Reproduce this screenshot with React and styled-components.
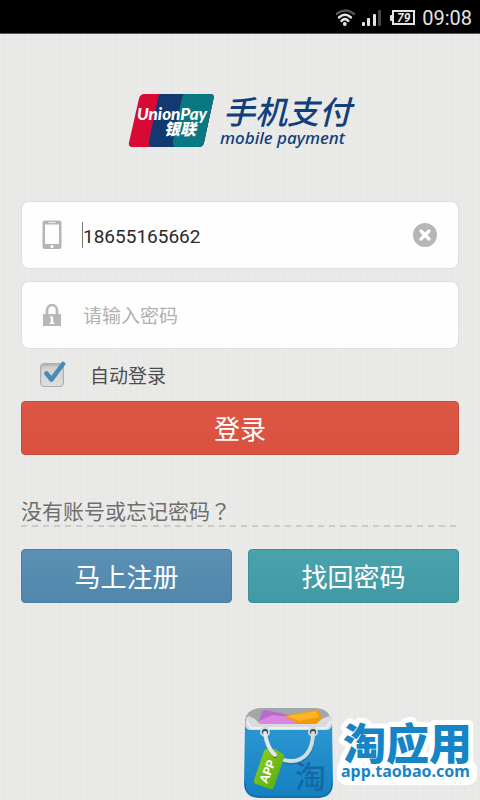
import React, { useState } from 'react'
import styled, { createGlobalStyle } from 'styled-components'

const cjk = '"Noto Sans CJK SC", sans-serif'

const GlobalStyle = createGlobalStyle`
  * {
    box-sizing: border-box;
  }

  body {
    margin: 0;
    font-family: Roboto, ${cjk};
    background-color: #e9e9e7;
    background-image:
      repeating-linear-gradient(90deg, rgba(255, 255, 255, 0.1) 0 1px, transparent 1px 3px, rgba(0, 0, 0, 0.008) 3px 4px, transparent 4px 7px),
      repeating-linear-gradient(0deg, rgba(255, 255, 255, 0.1) 0 1px, transparent 1px 4px, rgba(0, 0, 0, 0.008) 4px 5px, transparent 5px 9px);
  }
`

const Page = styled.div`
  min-height: 100vh;
  display: flex;
  flex-direction: column;
`

const StatusBar = styled.header`
  display: flex;
  align-items: center;
  justify-content: flex-end;
  height: 34px;
  padding: 2px 8px 0 0;
  background: #000;
  border-bottom: 1px solid #555;
  color: #e4e4e4;
  font-size: 20px;

  svg {
    margin-right: 6px;
  }
`

const Content = styled.main`
  flex: 1;
  display: flex;
  flex-direction: column;
  padding: 46px 21px 0;
`

const Brand = styled.div`
  display: flex;
  justify-content: center;
  height: 121px;
`

const Form = styled.form`
  display: flex;
  flex-direction: column;
`

const Field = styled.div`
  display: flex;
  align-items: center;
  height: 68px;
  margin-bottom: 12px;
  padding: 0 21px 0 18px;
  background: #fefefe;
  border: 1px solid #dededd;
  border-radius: 8px;
`

const FieldIcon = styled.label`
  display: flex;
  justify-content: center;
  width: 24px;
  margin-right: 18px;
`

const Input = styled.input`
  flex: 1;
  min-width: 0;
  height: 26px;
  padding: 2px 0 0;
  border: 0;
  border-left: 1px solid ${(props) => props.$active ? '#777' : 'transparent'};
  outline: none;
  background: transparent;
  color: #2a2a2a;
  font-family: Roboto, ${cjk};
  font-size: 19px;

  &::placeholder {
    color: #b0b0b0;
    opacity: 1;
  }
`

const ClearButton = styled.button`
  display: flex;
  padding: 0;
  border: 0;
  background: none;
  cursor: pointer;
`

const Remember = styled.label`
  display: flex;
  align-items: flex-start;
  gap: 24px;
  height: 28px;
  padding-left: 19px;
  color: #4e4e4e;
  font-size: 19px;
  line-height: 32px;
`

const CheckWrap = styled.span`
  display: grid;

  > * {
    grid-area: 1 / 1;
  }
`

const Checkbox = styled.input`
  appearance: none;
  align-self: end;
  width: 24px;
  height: 24px;
  margin: 0;
  background: linear-gradient(#cfcfcf, #dedede);
  border: 1px solid #adadad;
  border-radius: 4px;
  box-shadow: inset 0 2px 2px rgba(0, 0, 0, 0.14);

  & + svg {
    visibility: hidden;
    pointer-events: none;
  }

  &:checked + svg {
    visibility: visible;
  }
`

const Button = styled.button`
  flex: 1;
  min-height: 54px;
  padding: 0;
  background: linear-gradient(${(props) => props.$from}, ${(props) => props.$to});
  border: 1px solid ${(props) => props.$edge};
  border-radius: 4px;
  color: #fff;
  font-family: ${cjk};
  font-size: 26px;
  line-height: 36px;
  cursor: pointer;
`

const LoginRow = styled.div`
  display: flex;
  margin-top: 12px;
`

const Hint = styled.p`
  margin: 43px 0 0;
  color: #6e6e6e;
  font-size: 21px;
  line-height: 25px;
`

const QuestionMark = styled.span`
  font-family: "Noto Sans CJK TC", sans-serif;
`

const Divider = styled.div`
  height: 2px;
  background: repeating-linear-gradient(90deg, #cbcbca 0 6px, transparent 6px 11px);
`

const Actions = styled.div`
  display: flex;
  gap: 16px;
  margin-top: 22px;
`

const Store = styled.footer`
  display: flex;
  justify-content: flex-end;
  margin: auto -21px 0 0;
`

const PhoneIcon = () => (
  <svg width="20" height="30" viewBox="0 0 20 30" aria-hidden="true">
    <path fill="#b5b5b5" fillRule="evenodd" d="M3 0.500h14a2.500 2.500 0 0 1 2.500 2.500v23.500a2.500 2.500 0 0 1-2.500 2.500h-14a2.500 2.500 0 0 1-2.500-2.500v-23.500a2.500 2.500 0 0 1 2.500-2.500zM3 4.500v19.500h14v-19.500z" />
    <path d="M6.500 2.500h7" stroke="#e6e6e6" strokeWidth="1.200" />
    <circle cx="10" cy="26.500" r="1.500" fill="#fff" />
  </svg>
)

const LockIcon = () => (
  <svg width="20" height="24" viewBox="0 0 20 24" aria-hidden="true">
    <path d="M5 12V7.500a5 5.500 0 0 1 10 0V12" fill="none" stroke="#b8b8b8" strokeWidth="2.600" />
    <rect x="1" y="11" width="18" height="12" fill="#b8b8b8" />
    <path d="M8 13.500h3.200v6h1v1.500h-4.500v-1.500h1.100v-4.500h-0.800z" fill="#fff" />
  </svg>
)

const ClearIcon = () => (
  <svg width="24" height="24" viewBox="0 0 24 24" aria-hidden="true">
    <circle cx="12" cy="12" r="12" fill="#b6b6b6" />
    <path d="M8 8l8 8M16 8l-8 8" stroke="#fff" strokeWidth="3.200" strokeLinecap="round" />
  </svg>
)

const CheckMark = () => (
  <svg width="26" height="26" viewBox="0 0 26 26" aria-hidden="true">
    <path d="M6.500 12.500L11.500 18.500L23 3" fill="none" stroke="#4a8bb5" strokeWidth="4.600" strokeLinecap="round" strokeLinejoin="round" />
  </svg>
)

const StatusIcons = () => (
  <svg width="80" height="22" viewBox="338 7 80 22" aria-hidden="true">
    <g fill="none" strokeLinecap="round">
      <path d="M338.500 14Q347.500 7 356 14" stroke="#555" strokeWidth="2.500" />
      <path d="M341 17.500Q347 12 353 17.500" stroke="#e4e4e4" strokeWidth="2.500" />
      <path d="M343.500 20.800Q347 17.500 350.300 20.800" stroke="#e4e4e4" strokeWidth="2.500" />
    </g>
    <circle cx="346.800" cy="24" r="1.900" fill="#e4e4e4" />
    <g fill="#e4e4e4">
      <rect x="364" y="22" width="3" height="4" rx="1" />
      <rect x="369" y="18" width="3" height="8" rx="1" />
      <rect x="375" y="14" width="3" height="12" rx="1" />
      <rect x="380" y="10" width="3" height="16" rx="1" fill="#484848" />
      <rect x="392" y="15" width="3" height="6" rx="1" />
    </g>
    <rect x="395" y="11" width="21" height="13" fill="none" stroke="#e4e4e4" strokeWidth="2" />
    <text x="399" y="22" fill="#e4e4e4" fontFamily="Roboto, sans-serif" fontSize="12" fontWeight="700" fontStyle="italic">79</text>
  </svg>
)

const Logo = () => (
  <svg width="240" height="70" viewBox="120 80 240 70" role="img" aria-label="银联 UnionPay 手机支付">
    <defs>
      <clipPath id="card">
        <path d="M144.500 94H210q4.500 0 3.500 4.500L204 142.500q-1 4.500-5.500 4.500H133q-5 0-4-4.500L139 98.500q1-4.500 5.500-4.500z" />
      </clipPath>
    </defs>
    <g clipPath="url(#card)">
      <rect x="128" y="93" width="87" height="55" fill="#d80a35" />
      <path d="M164 93q-5 0-6 5L149 141q-1 6 4 7h63V93z" fill="#133a70" />
      <path d="M188 93q-5 0-6 5L173 141q-1 6 4 7h39V93z" fill="#087981" />
    </g>
    <g fill="#fff" fontStyle="italic">
      <text x="137" y="120" fontFamily="Lato, sans-serif" fontSize="17" fontWeight="900">UnionPay</text>
      <text x="164" y="135" fontFamily={cjk} fontSize="16" fontWeight="900">银联</text>
    </g>
    <text x="223" y="124" fill="#113f7c" fontFamily={cjk} fontSize="32" fontStyle="italic" fontWeight="500">手机支付</text>
    <text x="220" y="144" fill="#113f7c" fontFamily='"Noto Sans", sans-serif' fontSize="17" fontStyle="italic" fontWeight="500">mobile payment</text>
  </svg>
)

const StoreBadge = () => (
  <svg width="238" height="94" viewBox="242 706 238 94" role="img" aria-label="淘应用 app.taobao.com">
    <defs>
      <linearGradient id="bag" x1="0" y1="0" x2="0" y2="1">
        <stop offset="0" stopColor="#2b97d2" />
        <stop offset="1" stopColor="#1580c0" />
      </linearGradient>
      <linearGradient id="tag" x1="0" y1="0" x2="1" y2="1">
        <stop offset="0" stopColor="#8fd11c" />
        <stop offset="1" stopColor="#55a812" />
      </linearGradient>
    </defs>
    <path d="M262 708h52q14 0 17 11v8H245v-8q3-11 17-11z" fill="#a3a7aa" />
    <path d="M258 724l4-12q1-2 4-2l27 6-2 10z" fill="#bb68cf" />
    <path d="M259 721l13-6 21 2 8 8h-43z" fill="#d985e4" />
    <path d="M284 716l32-6q3 0 4 3l2 10-20 3z" fill="#f39a0b" />
    <path d="M287 716l29-5 3 6-20 4z" fill="#ffb327" />
    <path d="M246 719q0-2 3-3l6 3 5 5h56l6-5 7-3q3 1 3 3l1 11H245z" fill="#d9dcdf" />
    <path d="M247 721l4 7h75l5-7" fill="none" stroke="#eceeef" strokeWidth="2" />
    <path d="M245 725q1 5 6 5h75q5 0 6-5l1 58q0 15-16 15h-57q-16 0-16-15z" fill="url(#bag)" />
    <path d="M245 783q0 14 15 14h57q15 0 15-14" fill="none" stroke="#0e659b" />
    <text x="295" y="788" fill="#1269a5" fontFamily={cjk} fontSize="31" fontWeight="500">淘</text>
    <circle cx="265" cy="732" r="4" fill="#2b4a5b" stroke="#d0d6d8" strokeWidth="2" />
    <circle cx="313" cy="732" r="4" fill="#2b4a5b" stroke="#d0d6d8" strokeWidth="2" />
    <path d="M313 735C313 752 305 763 291 763C286 763 280 761 276 758" fill="none" stroke="#10659b" strokeWidth="4" opacity="0.400" />
    <path d="M313 733C313 750 305 761 291 761C286 761 280 759 276 756" fill="none" stroke="#d5dde2" strokeWidth="4" strokeLinecap="round" />
    <path d="M267 749l8 0 8 5q2 1 1 4l-10 29q-1 3-4 2l-14-5q-3-1-2-4l10-29q1-2 3-2z" fill="url(#tag)" />
    <circle cx="275" cy="756" r="2" fill="#2d6d15" />
    <path d="M265 733q2 15 10 22" fill="none" stroke="#e3e8ea" strokeWidth="4" strokeLinecap="round" />
    <text x="267" y="784" fill="#fff" fontFamily="Lato, sans-serif" fontSize="12" fontWeight="900" transform="rotate(-68 267 784)">APP</text>
    <rect x="337" y="760" width="140" height="25" rx="9" fill="#fff" />
    <text x="343" y="760" fill="#1585c5" stroke="#fff" strokeWidth="10" strokeLinejoin="round" paintOrder="stroke" fontFamily={cjk} fontSize="43" fontWeight="900">淘应用</text>
    <text x="341" y="777" fill="#1585c5" fontFamily='"Noto Sans", sans-serif' fontSize="16" fontWeight="700">app.taobao.com</text>
  </svg>
)

const App = () => {
  const [phone, setPhone] = useState('18655165662')
  const [password, setPassword] = useState('')
  const [remember, setRemember] = useState(true)

  return (
    <>
      <GlobalStyle />
      <Page>
        <StatusBar>
          <StatusIcons />
          <time>09:08</time>
        </StatusBar>

        <Content>
          <Brand><Logo /></Brand>

          <Form onSubmit={(e) => e.preventDefault()}>
            <Field>
              <FieldIcon htmlFor="phone" aria-label="手机号"><PhoneIcon /></FieldIcon>
              <Input id="phone" type="tel" $active value={phone} onChange={(e) => setPhone(e.target.value)} />
              <ClearButton type="button" aria-label="清除" onClick={() => setPhone('')}>
                <ClearIcon />
              </ClearButton>
            </Field>
            <Field>
              <FieldIcon htmlFor="password" aria-label="密码"><LockIcon /></FieldIcon>
              <Input
                id="password"
                type="password"
                placeholder="请输入密码"
                value={password}
                onChange={(e) => setPassword(e.target.value)}
              />
            </Field>

            <Remember>
              <CheckWrap>
                <Checkbox type="checkbox" checked={remember} onChange={(e) => setRemember(e.target.checked)} />
                <CheckMark />
              </CheckWrap>
              自动登录
            </Remember>

            <LoginRow>
              <Button type="submit" $from="#dd5544" $to="#da5140" $edge="#c54b3c">登录</Button>
            </LoginRow>
          </Form>

          <Hint>没有账号或忘记密码<QuestionMark>？</QuestionMark></Hint>
          <Divider />
          <Actions>
            <Button type="button" $from="#5b90b4" $to="#5087ac" $edge="#477fa6">马上注册</Button>
            <Button type="button" $from="#49a3ad" $to="#4199a3" $edge="#378f99">找回密码</Button>
          </Actions>

          <Store><StoreBadge /></Store>
        </Content>
      </Page>
    </>
  )
}

export default App
